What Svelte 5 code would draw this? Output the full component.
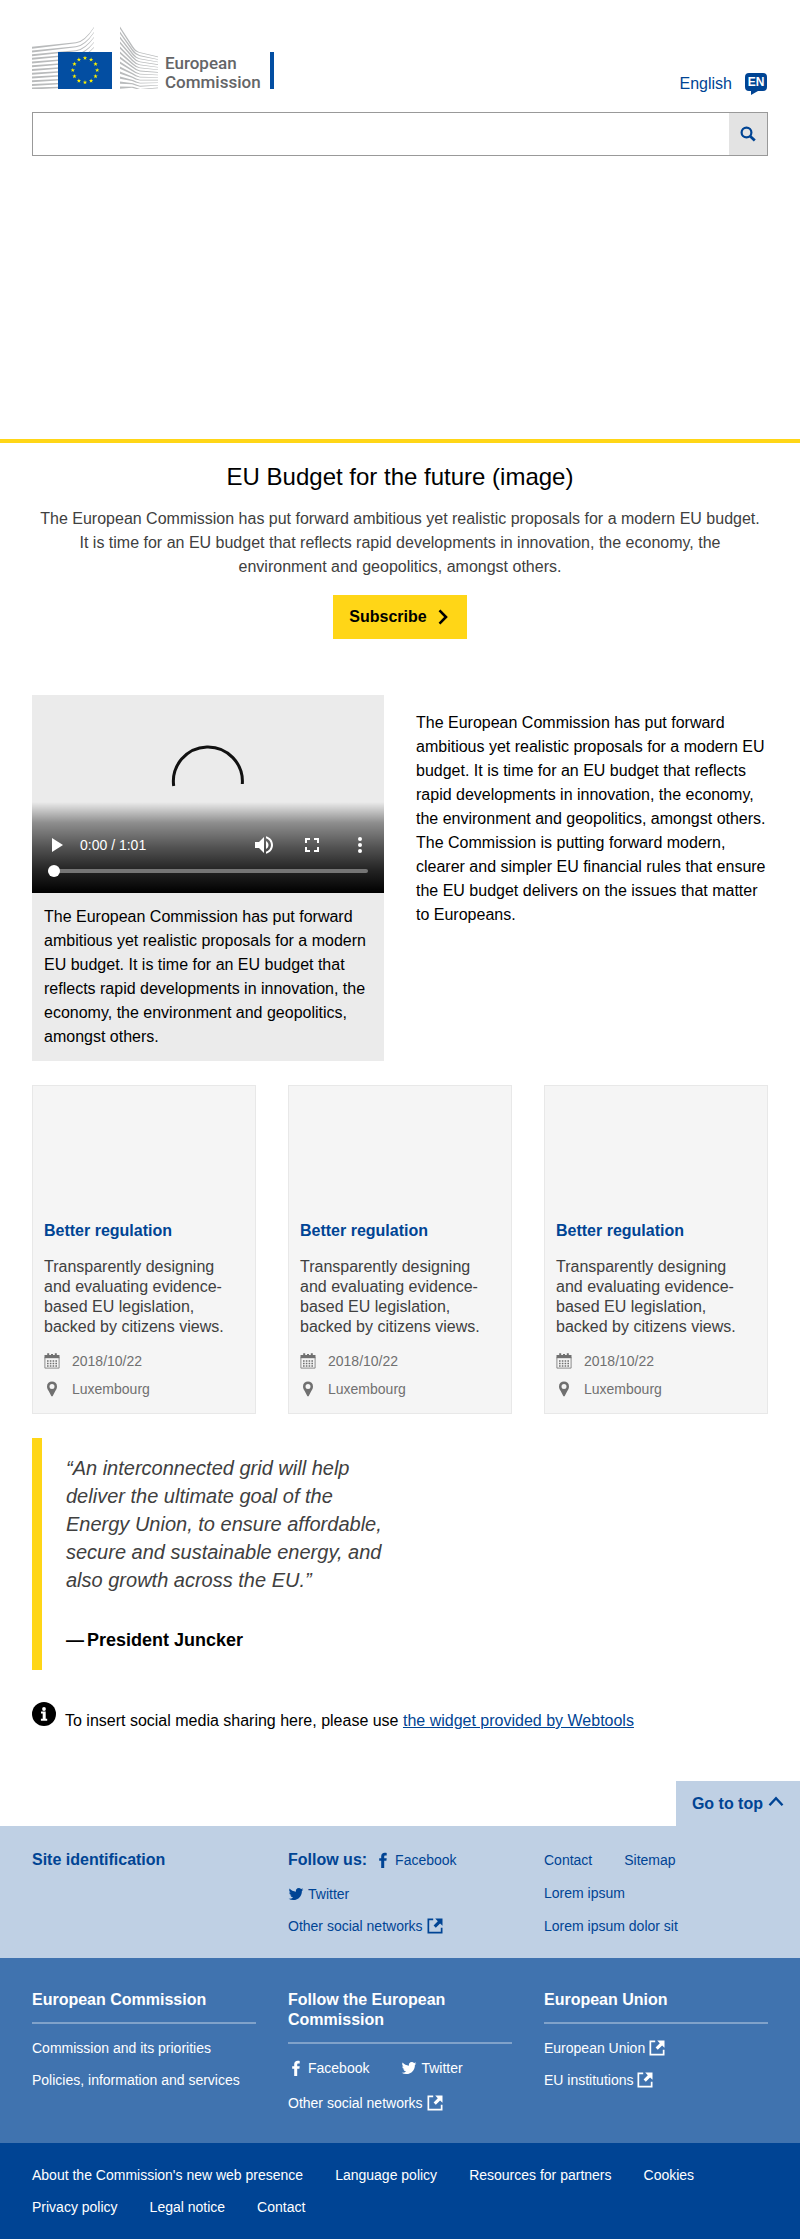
<script>
  const stars = Array.from({ length: 12 }, (_, i) => {
    const a = (i * Math.PI) / 6;
    const cx = 53 + 12.2 * Math.sin(a);
    const cy = 44.2 - 12.2 * Math.cos(a);
    return Array.from({ length: 10 }, (_, k) => {
      const r = k % 2 ? 0.9 : 2.3;
      const b = (k * Math.PI) / 5;
      return `${(cx + r * Math.sin(b)).toFixed(2)},${(cy - r * Math.cos(b)).toFixed(2)}`;
    }).join(' ');
  });

  const leftWing = Array.from({ length: 12 }, (_, t) => {
    const y = 20.7 + t * 3.72;
    const m = 16.3 + t * 4;
    const e = 1 + t * 5;
    return `M0 ${y}L44 ${m}Q53 ${m - 1.6} 62 ${e}V${e + 0.7}Q53 ${m - 0.2} 44 ${m + 1}L0 ${y + 2}Z`;
  });

  const rightWing = Array.from({ length: 13 }, (_, t) => {
    const y = 0.6 + t * 5;
    const m = 24.5 + t * 3.05;
    const e = 30.6 + t * 2.58;
    return `M88 ${y}L101 ${m - 4 + t * 0.3}Q104 ${m + 0.6} 108 ${m + 1.8}L126 ${e}V${e + 0.6}L108 ${m + 2.6}Q103 ${m + 1.6} 100 ${m - 3 + t * 0.3}L88 ${y + 2.2}Z`;
  });

  const cards = [1, 2, 3];
  const body =
    'The European Commission has put forward ambitious yet realistic proposals for a modern EU budget. It is time for an EU budget that reflects rapid developments in innovation, the economy, the environment and geopolitics, amongst others.';
  const legal = [
    "About the Commission's new web presence",
    'Language policy',
    'Resources for partners',
    'Cookies',
    'Privacy policy',
    'Legal notice',
    'Contact'
  ];
</script>

{#snippet facebook()}
  <svg class="icon" viewBox="0 0 16 16" aria-hidden="true"><path d="M11.7 1v2.5h-1.3c-.9 0-1.2.4-1.2 1.1v1.6h2.5l-.3 2.6H9.2V16H6.2V8.8H4.2V6.2h2V4.3C6.2 2.1 7.6.8 9.7.8c.9 0 1.7.1 2 .2z" /></svg>
{/snippet}

{#snippet twitter()}
  <svg class="icon" viewBox="-1 -1 26 26" aria-hidden="true"><path d="M23.953 4.57a10 10 0 01-2.825.775 4.958 4.958 0 002.163-2.723c-.951.555-2.005.959-3.127 1.184a4.92 4.92 0 00-8.384 4.482C7.69 8.095 4.067 6.13 1.64 3.162a4.822 4.822 0 00-.666 2.475c0 1.71.87 3.213 2.188 4.096a4.904 4.904 0 01-2.228-.616v.06a4.923 4.923 0 003.946 4.827 4.996 4.996 0 01-2.212.085 4.936 4.936 0 004.604 3.417 9.867 9.867 0 01-6.102 2.105c-.39 0-.779-.023-1.17-.067a13.995 13.995 0 007.557 2.209c9.053 0 13.998-7.496 13.998-13.985 0-.21 0-.42-.015-.63A9.935 9.935 0 0024 4.59z" /></svg>
{/snippet}

{#snippet external()}
  <svg class="icon" viewBox="0 0 16 16" aria-hidden="true">
    <path d="M6.2.5H.5v15h15V9.700h-1.700v4.100H2.200V2.200h4z" />
    <path d="M8.200.5h7.300v7.300l-2.400-2.400-4.300 4.300-2.200-2.200 4.200-4.300z" />
  </svg>
{/snippet}

<header class="header">
  <div class="brand">
    <a href="#home" aria-label="European Commission">
      <svg class="logo" width="242" height="68" viewBox="0 0 242 68">
        <g fill="#b9bbbc">
          {#each leftWing as d}<path {d} />{/each}
          {#each rightWing as d}<path {d} />{/each}
        </g>
        <rect x="0" y="63" width="140" height="5" fill="#fff" />
        <rect x="26" y="26" width="54" height="37" fill="#034ea2" />
        <g fill="#fff200">
          {#each stars as points}<polygon {points} />{/each}
        </g>
        <text x="133" y="43">European</text>
        <text x="133" y="62">Commission</text>
        <rect x="238" y="26" width="4" height="37" fill="#034ea2" />
      </svg>
    </a>
    <a class="language" href="#language">
      English
      <svg width="24" height="24" viewBox="0 0 24 24">
        <path fill="#004494" d="M5 1h14a4 4 0 0 1 4 4v10a4 4 0 0 1-4 4h-5l-7 4v-4H5a4 4 0 0 1-4-4V5a4 4 0 0 1 4-4z" />
        <text x="12" y="14" text-anchor="middle">EN</text>
      </svg>
    </a>
  </div>
  <form class="search" onsubmit={(e) => e.preventDefault()}>
    <input type="search" aria-label="Search" />
    <button type="submit" aria-label="Search">
      <svg width="16" height="16" viewBox="0 0 16 16"><g fill="none" stroke="#004494"><circle cx="6.500" cy="6.500" r="4.900" stroke-width="2.200" /><path d="M10.200 10.200l4.600 4.300" stroke-width="2.800" /></g></svg>
    </button>
  </form>
</header>

<section class="hero">
  <div class="hero-image"></div>
  <div class="hero-body">
    <h1>EU Budget for the future (image)</h1>
    <p>{body}</p>
    <a class="cta" href="#subscribe">
      Subscribe
      <svg width="16" height="16" viewBox="0 0 16 16"><path d="M4.500 1.300L11 8l-6.500 6.700" fill="none" stroke="#000" stroke-width="2.600" /></svg>
    </a>
  </div>
</section>

<main>
  <div class="media-row">
    <figure>
      <div class="video">
        <svg class="spinner" viewBox="0 0 352 198" aria-hidden="true"><path d="M141.700 91A34.500 34.500 0 1 1 210.300 89" fill="none" stroke="#111" stroke-width="3" /></svg>
        <div class="controls">
          <div class="control-row">
            <button aria-label="Play"><svg viewBox="0 0 24 24"><path d="M8 5v14l11-7z" /></svg></button>
            <span class="time">0:00 / 1:01</span>
            <button aria-label="Mute"><svg viewBox="0 0 24 24"><path d="M3 9v6h4l5 5V4L7 9H3zm13.500 3c0-1.770-1.020-3.290-2.500-4.030v8.050c1.480-.730 2.500-2.250 2.500-4.020zM14 3.230v2.060c2.890.860 5 3.540 5 6.710s-2.110 5.850-5 6.710v2.060c4.010-.910 7-4.490 7-8.770s-2.990-7.860-7-8.770z" /></svg></button>
            <button aria-label="Full screen"><svg viewBox="0 0 24 24"><path d="M7 14H5v5h5v-2H7v-3zm-2-4h2V7h3V5H5v5zm12 7h-3v2h5v-5h-2v3zM14 5v2h3v3h2V5h-5z" /></svg></button>
            <button aria-label="More options"><svg viewBox="0 0 24 24"><circle cx="12" cy="6" r="2" /><circle cx="12" cy="12" r="2" /><circle cx="12" cy="18" r="2" /></svg></button>
          </div>
          <input class="seek" type="range" min="0" max="61" value="0" aria-label="Seek" />
        </div>
      </div>
      <figcaption>{body}</figcaption>
    </figure>
    <p class="media-text">
      {body} The Commission is putting forward modern, clearer and simpler EU financial rules that ensure the EU budget
      delivers on the issues that matter to Europeans.
    </p>
  </div>

  <div class="cards">
    {#each cards as id (id)}
      <article class="card">
        <div class="card-image"></div>
        <h2><a href="#regulation">Better regulation</a></h2>
        <p>Transparently designing and evaluating evidence-based EU legislation, backed by citizens views.</p>
        <ul>
          <li>
            <svg class="icon" viewBox="0 0 16 16" aria-hidden="true">
              <path d="M.5 2h15v3.200H.5z" />
              <path d="M3.200.3h2v2.500h-2zM10.800.3h2v2.500h-2zM7 1h2v1.500H7z" />
              <path d="M.9 4.500h14.200v10.600H.9z" fill="none" stroke="#707070" stroke-width=".8" />
              <path d="M3 8h10.500M3 10.500h10.500M3 13h10.500" fill="none" stroke="#707070" stroke-width="1.500" stroke-dasharray="1.600 1.200" />
            </svg>
            2018/10/22
          </li>
          <li>
            <svg class="icon" viewBox="0 0 16 16" aria-hidden="true"><path fill-rule="evenodd" d="M8 .4a5 5 0 0 1 5 5c0 1.700-.8 3.200-1.700 4.600L8.600 15.300H7.400L4.700 10C3.800 8.600 3 7.100 3 5.400a5 5 0 0 1 5-5zm0 2.500a2.500 2.500 0 1 0 0 5 2.500 2.500 0 0 0 0-5z" /></svg>
            Luxembourg
          </li>
        </ul>
      </article>
    {/each}
  </div>

  <blockquote>
    <p>“An interconnected grid will help deliver the ultimate goal of the Energy Union, to ensure affordable, secure and sustainable energy, and also growth across the EU.”</p>
    <footer><span>—</span><cite>President Juncker</cite></footer>
  </blockquote>

  <div class="notice">
    <svg width="24" height="24" viewBox="0 0 24 24" aria-hidden="true">
      <circle cx="12" cy="12" r="12" />
      <path fill="#fff" d="M9 9.500h4.700v7.300h1.500v2H8.900v-2h1.800v-5.300H9z" /><circle cx="12" cy="7" r="1.900" fill="#fff" />
    </svg>
    <p>To insert social media sharing here, please use <a href="#webtools">the widget provided by Webtools</a></p>
  </div>
</main>

<footer class="footer">
  <a class="to-top" href="#top">
    Go to top
    <svg width="16" height="16" viewBox="0 0 16 16" aria-hidden="true"><path d="M1.500 11.200L8 4.200l6.500 7" fill="none" stroke="#004494" stroke-width="2.400" /></svg>
  </a>
  <div class="site grid">
    <h2>Site identification</h2>
    <div class="follow">
      <div class="first"><h2>Follow us:</h2><a href="#facebook">{@render facebook()}Facebook</a></div>
      <a href="#twitter">{@render twitter()}Twitter</a>
      <a href="#networks">Other social networks{@render external()}</a>
    </div>
    <div class="links">
      <div><a href="#contact">Contact</a><a href="#sitemap">Sitemap</a></div>
      <a href="#lorem">Lorem ipsum</a>
      <a href="#dolor">Lorem ipsum dolor sit</a>
    </div>
  </div>
  <div class="corporate grid">
    <section>
      <h2>European Commission</h2>
      <ul>
        <li><a href="#priorities">Commission and its priorities</a></li>
        <li><a href="#policies">Policies, information and services</a></li>
      </ul>
    </section>
    <section>
      <h2>Follow the European Commission</h2>
      <ul class="social">
        <li><a href="#facebook">{@render facebook()}Facebook</a><a href="#twitter">{@render twitter()}Twitter</a></li>
        <li><a href="#networks">Other social networks{@render external()}</a></li>
      </ul>
    </section>
    <section>
      <h2>European Union</h2>
      <ul>
        <li><a href="#union">European Union{@render external()}</a></li>
        <li><a href="#institutions">EU institutions{@render external()}</a></li>
      </ul>
    </section>
  </div>
  <nav class="legal">
    {#each legal as item}<a href="#legal">{item}</a>{/each}
  </nav>
</footer>

<style>
  :global(body) {
    font: 16px/24px "Liberation Sans", Arial, sans-serif;
    color: #000;
    background: #fff;
  }
  :global(*) {
    box-sizing: border-box;
  }
  h1, h2, p, ul, figure, blockquote {
    margin: 0;
    padding: 0;
  }
  ul {
    list-style: none;
  }
  a {
    color: #004494;
    text-decoration: none;
  }
  svg {
    display: block;
    flex: none;
  }
  .icon {
    width: 16px;
    height: 16px;
    fill: currentColor;
  }

  .header {
    padding: 26px 32px 0;
  }
  .brand {
    display: flex;
    justify-content: space-between;
    min-height: 70px;
  }
  .logo {
    overflow: visible;
  }
  .logo text {
    font: 500 17px Roboto, sans-serif;
    fill: #646567;
  }
  .language {
    display: flex;
    align-self: flex-end;
    gap: 12px;
  }
  .language text {
    font: bold 12px "Liberation Sans", sans-serif;
    fill: #fff;
  }
  .search {
    display: flex;
    height: 44px;
    margin-top: 16px;
    border: 1px solid #999;
  }
  .search input {
    flex: 1;
    min-width: 0;
    padding: 0 12px;
    border: 0;
    font: inherit;
    appearance: none;
  }
  .search button {
    display: grid;
    place-items: center;
    width: 38px;
    padding: 0;
    border: 0;
    background: #e3e3e3;
  }

  .hero-image {
    height: 283px;
  }
  .hero-body {
    display: flex;
    flex-direction: column;
    align-items: center;
    padding: 18px 36px 0;
    border-top: 4px solid #ffd617;
    text-align: center;
  }
  h1 {
    font-size: 24px;
    line-height: 32px;
    font-weight: 400;
  }
  .hero-body p {
    margin: 14px 0 16px;
    color: #404040;
  }
  .cta {
    display: flex;
    align-items: center;
    gap: 8px;
    height: 44px;
    padding: 0 16px;
    background: #ffd617;
    color: #000;
    font-weight: 700;
  }

  main {
    padding: 56px 32px 48px;
  }
  .media-row {
    display: grid;
    grid-template-columns: 1fr 1fr;
    gap: 32px;
  }
  figure {
    background: #ebebeb;
  }
  .video {
    position: relative;
    aspect-ratio: 16 / 9;
  }
  .spinner {
    width: 100%;
  }
  .controls {
    position: absolute;
    inset: auto 0 0;
    padding: 19px 0 20px;
    background: linear-gradient(transparent, rgba(0, 0, 0, 0.4) 23%, rgba(0, 0, 0, 0.65) 50%, rgba(0, 0, 0, 0.85) 75%, #000);
  }
  .control-row {
    display: flex;
    align-items: center;
  }
  .control-row button {
    display: grid;
    place-items: center;
    width: 48px;
    height: 48px;
    padding: 0;
    border: 0;
    background: none;
  }
  .control-row svg {
    width: 24px;
    height: 24px;
    fill: #fff;
  }
  .time {
    flex: 1;
    font-size: 14px;
    color: #fff;
  }
  .seek {
    display: block;
    width: calc(100% - 32px);
    height: 4px;
    margin: 0 16px;
    border-radius: 2px;
    background: #757575;
    appearance: none;
  }
  .seek::-webkit-slider-thumb {
    width: 12px;
    height: 12px;
    border-radius: 50%;
    background: #fff;
    appearance: none;
  }
  figcaption {
    padding: 12px;
  }
  .media-text {
    padding-top: 16px;
  }

  .cards {
    display: grid;
    grid-template-columns: repeat(3, 1fr);
    gap: 32px;
    margin: 24px 0;
  }
  .card {
    padding: 0 11px 16px;
    border: 1px solid #e8e8e8;
    background: #f5f5f5;
    line-height: 20px;
  }
  .card-image {
    height: 135px;
  }
  h2 {
    font-size: 16px;
    line-height: 20px;
  }
  .card p {
    margin: 16px 0;
    color: #404040;
  }
  .card ul {
    display: grid;
    gap: 12px;
    font-size: 14px;
    line-height: 16px;
    color: #707070;
  }
  .card li {
    display: flex;
    gap: 12px;
  }

  blockquote {
    width: calc(50% - 16px);
    padding: 16px 0 16px 24px;
    border-left: 10px solid #ffd617;
    line-height: 28px;
  }
  blockquote p {
    margin-bottom: 32px;
    font-size: 20px;
    font-style: italic;
    color: #404040;
  }
  blockquote footer {
    display: flex;
    gap: 3px;
    font-size: 18px;
    font-weight: 700;
  }
  cite {
    font-style: normal;
  }
  .notice {
    display: flex;
    align-items: baseline;
    gap: 9px;
    margin-top: 32px;
  }
  .notice a {
    text-decoration: underline;
  }

  .footer {
    display: flex;
    flex-direction: column;
  }
  .to-top {
    display: flex;
    align-self: flex-end;
    gap: 5px;
    padding: 11px 16px 10px;
    background: #bfd0e4;
    font-weight: 700;
  }
  .to-top svg {
    margin-top: 2px;
  }
  .grid {
    display: grid;
    grid-template-columns: repeat(3, 1fr);
    gap: 32px;
  }
  .site {
    padding: 24px 32px 22px;
    background: #bfd0e4;
    color: #004494;
  }
  .footer a:not(.to-top) {
    font-size: 14px;
    line-height: 20px;
  }
  .grid a {
    display: flex;
    align-items: center;
    gap: 4px;
  }
  .follow {
    display: flex;
    flex-direction: column;
    gap: 12px;
  }
  .first {
    display: flex;
    gap: 8px;
    padding-bottom: 2px;
  }
  .links {
    display: flex;
    flex-direction: column;
    gap: 13px;
  }
  .links div, .social li {
    display: flex;
    gap: 32px;
  }
  .corporate {
    padding: 32px 32px 30px;
    background: #4073af;
    color: #fff;
  }
  .corporate a, .legal a {
    color: #fff;
  }
  .corporate h2 {
    padding-bottom: 12px;
    border-bottom: 2px solid #80a2ca;
  }
  .corporate ul {
    display: grid;
    gap: 12px;
    padding-top: 14px;
  }
  .corporate .social {
    gap: 15px;
  }
  .legal {
    display: flex;
    flex-wrap: wrap;
    gap: 12px 32px;
    padding: 22px 32px;
    background: #004494;
  }
</style>
